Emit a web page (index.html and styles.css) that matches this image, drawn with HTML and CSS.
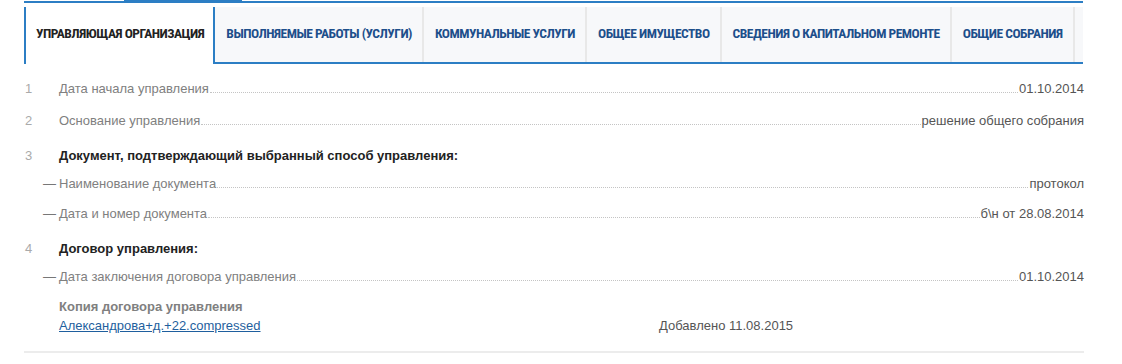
FILE: index.html
```html
<!DOCTYPE html>
<html lang="ru">
<head>
    <meta charset="UTF-8">
    <title>Управляющая организация</title>
    <link rel="stylesheet" href="styles.css">
</head>
<body>
    <div class="page">
        <div class="topline"><div class="topline-mark"></div></div>
        <ul class="tabs">
            <li class="tab active">Управляющая организация</li>
            <li class="tabs-rest">
                <a class="tab" href="#">Выполняемые работы (услуги)</a>
                <a class="tab" href="#">Коммунальные услуги</a>
                <a class="tab" href="#">Общее имущество</a>
                <a class="tab" href="#">Сведения о капитальном ремонте</a>
                <a class="tab" href="#">Общие собрания</a>
            </li>
        </ul>
        <div class="info">
            <div class="row main">
                <span class="num">1</span>
                <span class="label">Дата начала управления</span>
                <span class="leader"></span>
                <span class="value">01.10.2014</span>
            </div>
            <div class="row main">
                <span class="num">2</span>
                <span class="label">Основание управления</span>
                <span class="leader"></span>
                <span class="value">решение общего собрания</span>
            </div>
            <div class="row head">
                <span class="num">3</span>
                <span class="title">Документ, подтверждающий выбранный способ управления:</span>
            </div>
            <div class="row sub">
                <span class="num dash">—</span>
                <span class="label">Наименование документа</span>
                <span class="leader"></span>
                <span class="value">протокол</span>
            </div>
            <div class="row sub">
                <span class="num dash">—</span>
                <span class="label">Дата и номер документа</span>
                <span class="leader"></span>
                <span class="value">б\н от 28.08.2014</span>
            </div>
            <div class="row head">
                <span class="num">4</span>
                <span class="title">Договор управления:</span>
            </div>
            <div class="row sub">
                <span class="num dash">—</span>
                <span class="label">Дата заключения договора управления</span>
                <span class="leader"></span>
                <span class="value">01.10.2014</span>
            </div>
            <div class="file">
                <div class="file-title">Копия договора управления</div>
                <div class="file-line">
                    <a class="file-link" href="#">Александрова+д.+22.compressed</a>
                    <span class="file-date">Добавлено 11.08.2015</span>
                </div>
            </div>
        </div>
    </div>
</body>
</html>
```

FILE: styles.css
```css
body {
    margin: 0;
    font-family: "Liberation Sans", Arial, sans-serif;
    font-size: 13px;
    color: #777;
    background-color: #fff;
}
.page {
    width: 1060px;
    padding-left: 24px;
}
.topline {
    height: 2px;
    margin-top: 1px;
    margin-bottom: 4px;
    margin-right: 1px;
    background-color: #2c7ec4;
}
.topline-mark {
    width: 118px;
    height: 3px;
    margin-left: 100px;
    transform: translateY(-1px);
    background-color: #2c7ec4;
}
.tabs {
    display: flex;
    margin: 0 1px 0 0;
    padding: 0;
    list-style: none;
}
.tab {
    display: block;
    padding: 18px 10px 21px 11px;
    line-height: 16px;
    font-family: Roboto, "DejaVu Sans Condensed", sans-serif;
    font-stretch: 75%;
    font-weight: bold;
    font-size: 13.5px;
    letter-spacing: -0.5px;
    text-transform: uppercase;
    text-decoration: none;
    color: #1d4f8b;
    white-space: nowrap;
}
.tab.active {
    border-left: 2px solid #2c7ec4;
    padding: 18px 9px 21px 10px;
    color: #222;
    background-color: #fff;
}
.tabs-rest {
    display: flex;
    flex: 1;
    background-color: #f7f8fa;
    border-left: 2px solid #2c7ec4;
    border-bottom: 2px solid #2c7ec4;
}
.tabs-rest .tab {
    border-right: 2px solid #e8e8e8;
}
.info {
    padding-top: 9px;
}
.row {
    display: flex;
    align-items: flex-end;
    line-height: 16px;
    padding: 6px 0 8px;
}
.row.main {
    padding: 8px 0;
}
.row.head {
    padding: 11px 0 6px;
}
.num {
    width: 35px;
    flex-shrink: 0;
    padding-left: 1px;
    box-sizing: border-box;
    color: #aaa;
}
.num.dash {
    width: 35px;
    padding-left: 19px;
    color: #777;
}
.label {
    color: #808080;
}
.leader {
    flex: 1;
    margin: 0 1px 4px;
    border-bottom: 1px dotted #c4c4c4;
}
.value {
    color: #555;
}
.title {
    font-weight: bold;
    color: #222;
}
.file {
    padding: 6px 0 17px 35px;
    line-height: 16px;
    border-bottom: 2px solid #ececec;
}
.file-title {
    font-weight: bold;
    color: #808080;
}
.file-line {
    display: flex;
    margin-top: 3px;
}
.file-link {
    width: 600px;
    color: #1f5f9e;
    text-decoration: underline;
}
.file-date {
    color: #555;
}
```
